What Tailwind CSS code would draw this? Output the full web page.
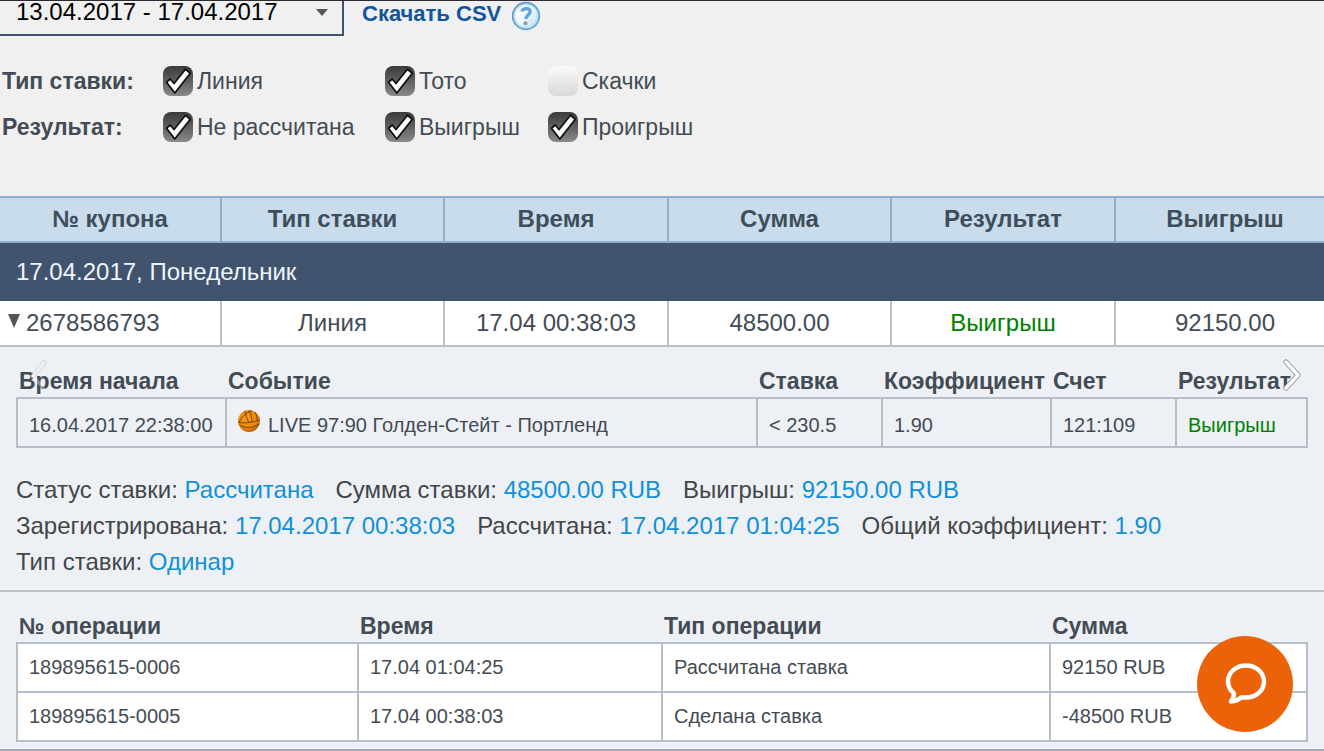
<!DOCTYPE html>
<html lang="ru">
<head>
<meta charset="utf-8">
<meta name="viewport" content="width=device-width, initial-scale=1">
<title>История ставок</title>
<script src="https://cdn.jsdelivr.net/npm/@tailwindcss/browser@4"></script>
</head>
<body class="bg-[#f0f0f0] font-['Liberation_Sans',Arial,sans-serif] text-2xl leading-7 text-[#434c54]">
<svg class="hidden" aria-hidden="true">
  <symbol id="tick" viewBox="0 0 30 30">
    <path d="M3.500 16.200 L7.200 13 L11 17.500 L22.500 3.200 L27.300 7.200 L11.800 27 Z" fill="#fff" stroke="#111" stroke-width="1.800" stroke-linejoin="round"/>
  </symbol>
</svg>
<div class="relative min-h-screen overflow-hidden border-t border-[#2d2a32]">

  <!-- Period and export -->
  <div class="flex items-start">
    <div class="grid w-86 items-start">
      <select aria-label="Период" class="col-start-1 row-start-1 h-[35px] appearance-none border-r-2 border-b-2 border-[#42546d] bg-transparent pb-3 pl-4 text-2xl leading-5 text-black">
        <option>13.04.2017 - 17.04.2017</option>
      </select>
      <svg class="pointer-events-none col-start-1 row-start-1 mt-2 mr-4 h-[7px] w-3 justify-self-end" viewBox="0 0 12 7"><path d="M0 0H12L6 7Z" fill="#555"/></svg>
    </div>
    <a href="#csv" class="ml-[18px] text-[22px] leading-[26px] font-bold text-[#10569f]">Скачать CSV</a>
    <button type="button" aria-label="Справка" class="ml-[10px] h-[30px] w-[30px]">
      <svg viewBox="0 0 30 30" class="h-[30px] w-[30px]">
        <defs><linearGradient id="hg" x1="0" y1="0" x2="1" y2="1"><stop offset="0" stop-color="#6f96c4"/><stop offset="1" stop-color="#62b0dc"/></linearGradient>
        <linearGradient id="hf" x1="0" y1="0" x2="1" y2="1"><stop offset="0" stop-color="#fff"/><stop offset="0.500" stop-color="#eef6fc"/><stop offset="1" stop-color="#b5e0f6"/></linearGradient></defs>
        <circle cx="15" cy="15" r="13.200" fill="url(#hf)" stroke="url(#hg)" stroke-width="2"/>
        <circle cx="15" cy="15" r="11.600" fill="none" stroke="#bcdcf0" stroke-width="1.500"/>
        <path d="M11 10.500C11.500 7 18.800 6.300 19.200 10.500C19.500 13.500 15 14 14.800 18" fill="none" stroke="#5ba4dc" stroke-width="3.200"/>
        <circle cx="14.500" cy="22.300" r="2" fill="#7d9dbd"/>
      </svg>
    </button>
  </div>

  <!-- Filters -->
  <div class="mt-[30px] grid grid-cols-[161px_222px_163px_auto] justify-start gap-y-4 pl-[2px] text-[23px] leading-[30px]">
    <span class="font-bold">Тип ставки:</span>
    <label class="flex gap-1 whitespace-nowrap"><span class="grid"><input type="checkbox" checked class="peer col-start-1 row-start-1 size-[30px] appearance-none rounded-lg bg-linear-to-b from-[#fafafa] to-[#d9d9d9] checked:from-[#3a3a3a] checked:to-[#8a8a8a]"><svg class="pointer-events-none col-start-1 row-start-1 hidden size-[30px] peer-checked:block"><use href="#tick"/></svg></span>Линия</label>
    <label class="flex gap-1 whitespace-nowrap"><span class="grid"><input type="checkbox" checked class="peer col-start-1 row-start-1 size-[30px] appearance-none rounded-lg bg-linear-to-b from-[#fafafa] to-[#d9d9d9] checked:from-[#3a3a3a] checked:to-[#8a8a8a]"><svg class="pointer-events-none col-start-1 row-start-1 hidden size-[30px] peer-checked:block"><use href="#tick"/></svg></span>Тото</label>
    <label class="flex gap-1 whitespace-nowrap"><span class="grid"><input type="checkbox" class="peer col-start-1 row-start-1 size-[30px] appearance-none rounded-lg bg-linear-to-b from-[#fafafa] to-[#d9d9d9] checked:from-[#3a3a3a] checked:to-[#8a8a8a]"><svg class="pointer-events-none col-start-1 row-start-1 hidden size-[30px] peer-checked:block"><use href="#tick"/></svg></span>Скачки</label>
    <span class="font-bold">Результат:</span>
    <label class="flex gap-1 whitespace-nowrap"><span class="grid"><input type="checkbox" checked class="peer col-start-1 row-start-1 size-[30px] appearance-none rounded-lg bg-linear-to-b from-[#fafafa] to-[#d9d9d9] checked:from-[#3a3a3a] checked:to-[#8a8a8a]"><svg class="pointer-events-none col-start-1 row-start-1 hidden size-[30px] peer-checked:block"><use href="#tick"/></svg></span>Не рассчитана</label>
    <label class="flex gap-1 whitespace-nowrap"><span class="grid"><input type="checkbox" checked class="peer col-start-1 row-start-1 size-[30px] appearance-none rounded-lg bg-linear-to-b from-[#fafafa] to-[#d9d9d9] checked:from-[#3a3a3a] checked:to-[#8a8a8a]"><svg class="pointer-events-none col-start-1 row-start-1 hidden size-[30px] peer-checked:block"><use href="#tick"/></svg></span>Выигрыш</label>
    <label class="flex gap-1 whitespace-nowrap"><span class="grid"><input type="checkbox" checked class="peer col-start-1 row-start-1 size-[30px] appearance-none rounded-lg bg-linear-to-b from-[#fafafa] to-[#d9d9d9] checked:from-[#3a3a3a] checked:to-[#8a8a8a]"><svg class="pointer-events-none col-start-1 row-start-1 hidden size-[30px] peer-checked:block"><use href="#tick"/></svg></span>Проигрыш</label>
  </div>

  <!-- Coupons -->
  <table class="mt-[54px] w-full table-fixed border-separate border-spacing-0 text-center">
    <colgroup><col class="w-[222px]"><col class="w-[223px]"><col class="w-[224px]"><col class="w-[223px]"><col class="w-[224px]"><col></colgroup>
    <thead>
      <tr class="h-[47px] bg-[#c9dcec] text-[#3e4f5b]">
        <th class="border-y-2 border-r-2 border-[#8fafcb] pb-[2px]">№ купона</th>
        <th class="border-y-2 border-r-2 border-[#8fafcb] pb-[2px]">Тип ставки</th>
        <th class="border-y-2 border-r-2 border-[#8fafcb] pb-[2px]">Время</th>
        <th class="border-y-2 border-r-2 border-[#8fafcb] pb-[2px]">Сумма</th>
        <th class="border-y-2 border-r-2 border-[#8fafcb] pb-[2px]">Результат</th>
        <th class="border-y-2 border-[#8fafcb] pb-[2px] pl-[10px]">Выигрыш</th>
      </tr>
    </thead>
    <tbody>
      <tr class="h-[58px] bg-[#42546d] text-[#eef5fd]"><td colspan="6" class="pl-4 text-left">17.04.2017, Понедельник</td></tr>
      <tr class="h-[46px] bg-white">
        <td class="border-r-2 border-b-2 border-[#bac1c9]"><button type="button" class="flex items-center gap-[6px] pl-2"><svg class="mb-1 h-[14px] w-3" viewBox="0 0 12 14"><path d="M0 0H12L6 14Z" fill="#555"/></svg>2678586793</button></td>
        <td class="border-r-2 border-b-2 border-[#bac1c9]">Линия</td>
        <td class="border-r-2 border-b-2 border-[#bac1c9]">17.04 00:38:03</td>
        <td class="border-r-2 border-b-2 border-[#bac1c9]">48500.00</td>
        <td class="border-r-2 border-b-2 border-[#bac1c9] text-[#008000]">Выигрыш</td>
        <td class="border-b-2 border-[#bac1c9] pl-[10px]">92150.00</td>
      </tr>
    </tbody>
  </table>

  <!-- Coupon details -->
  <section class="relative border-b-2 border-[#bac1c9] bg-[#edf1f5] px-4 pt-[17px] pb-[10px]">
    <table class="w-full table-fixed border-collapse text-left whitespace-nowrap">
      <colgroup><col class="w-[209px]"><col><col class="w-[125px]"><col class="w-[169px]"><col class="w-[125px]"><col class="w-[131px]"></colgroup>
      <thead class="text-[23px]"><tr class="h-[34px]">
        <th class="pl-[2px]">Время начала</th><th class="pl-[2px]">Событие</th><th class="pl-[2px]">Ставка</th><th class="pl-[2px]">Коэффициент</th><th class="pl-[2px]">Счет</th><th class="pl-[2px]">Результат</th>
      </tr></thead>
      <tbody class="text-xl"><tr class="h-[49px]">
        <td class="border-2 border-[#b6bec7] pt-1 pl-[11px]">16.04.2017 22:38:00</td>
        <td class="border-2 border-[#b6bec7] pt-1 pl-[10px]"><div class="flex items-center gap-[7px]">
          <svg class="mb-2 size-6" viewBox="0 0 24 24"><defs><radialGradient id="ball" cx="0.400" cy="0.350" r="0.700"><stop offset="0" stop-color="#f79a1c"/><stop offset="0.700" stop-color="#e8830b"/><stop offset="1" stop-color="#a85a0a"/></radialGradient></defs><circle cx="12" cy="12" r="11" fill="url(#ball)"/><path d="M1.500 13.500C8 14.500 16 13.500 22.500 11M8 1.800C8.500 6 10 10 12 13.800M15 1.500C9 4 4 8 2 14M12 1.500C14 5 15 9 15 13.500M2.500 16C9 20 16 19 22 15M18 3C19.500 6 20.500 9 20 12" fill="none" stroke="#5b3108" stroke-opacity="0.750" stroke-width="1"/></svg>LIVE 97:90 Голден-Стейт - Портленд</div></td>
        <td class="border-2 border-[#b6bec7] pt-1 pl-[11px]">&lt; 230.5</td>
        <td class="border-2 border-[#b6bec7] pt-1 pl-[11px]">1.90</td>
        <td class="border-2 border-[#b6bec7] pt-1 pl-[11px]">121:109</td>
        <td class="border-2 border-[#b6bec7] pt-1 pl-[11px] text-[#008000]">Выигрыш</td>
      </tr></tbody>
    </table>
    <div class="mt-6 text-[#434648] leading-9">
      <p class="flex gap-[22px]"><span>Статус ставки: <span class="text-[#1190d8]">Рассчитана</span></span><span>Сумма ставки: <span class="text-[#1190d8]">48500.00 RUB</span></span><span>Выигрыш: <span class="text-[#1190d8]">92150.00 RUB</span></span></p>
      <p class="flex gap-[22px]"><span>Зарегистрирована: <span class="text-[#1190d8]">17.04.2017 00:38:03</span></span><span>Рассчитана: <span class="text-[#1190d8]">17.04.2017 01:04:25</span></span><span>Общий коэффициент: <span class="text-[#1190d8]">1.90</span></span></p>
      <p>Тип ставки: <span class="text-[#1190d8]">Одинар</span></p>
    </div>
    <button type="button" aria-label="Назад" class="absolute top-[13px] left-[29px] h-8 w-5"><svg viewBox="0 0 20 32" class="h-8 w-5"><g fill="none" stroke-linecap="round"><path d="M15 3L4 16" stroke="#c4c4c4" stroke-opacity="0.600" stroke-width="5"/><path d="M15 3L4 16" stroke="#f4f5f6" stroke-width="3" stroke-opacity="0.900"/><path d="M4 16L15 29" stroke="#fff" stroke-width="3" stroke-opacity="0.350"/></g></svg></button>
    <button type="button" aria-label="Вперёд" class="absolute top-3 right-[22px] h-8 w-5"><svg viewBox="0 0 20 32" class="h-8 w-5"><path d="M4 3L16 16L4 29" fill="none" stroke="#888" stroke-width="5" stroke-linecap="round" stroke-linejoin="round"/><path d="M4 3L16 16L4 29" fill="none" stroke="#fff" stroke-width="3.500" stroke-linecap="round" stroke-linejoin="round"/></svg></button>
  </section>

  <!-- Operations -->
  <section class="border-b-2 border-[#a5abb2] bg-[#edf1f5] px-4 pt-[17px] pb-[7px]">
    <table class="w-full table-fixed border-collapse text-left whitespace-nowrap">
      <colgroup><col class="w-[341px]"><col class="w-[304px]"><col><col class="w-[257px]"></colgroup>
      <thead class="text-[23px]"><tr class="h-[34px]">
        <th class="pl-[2px]">№ операции</th><th class="pl-[2px]">Время</th><th class="pl-[2px]">Тип операции</th><th class="pl-[2px]">Сумма</th>
      </tr></thead>
      <tbody class="bg-white text-xl">
        <tr class="h-[49px]"><td class="border-2 border-[#b6bec7] pb-[2px] pl-[11px]">189895615-0006</td><td class="border-2 border-[#b6bec7] pb-[2px] pl-[11px]">17.04 01:04:25</td><td class="border-2 border-[#b6bec7] pb-[2px] pl-[11px]">Рассчитана ставка</td><td class="border-2 border-[#b6bec7] pb-[2px] pl-[11px]">92150 RUB</td></tr>
        <tr class="h-[49px]"><td class="border-2 border-[#b6bec7] pb-[2px] pl-[11px]">189895615-0005</td><td class="border-2 border-[#b6bec7] pb-[2px] pl-[11px]">17.04 00:38:03</td><td class="border-2 border-[#b6bec7] pb-[2px] pl-[11px]">Сделана ставка</td><td class="border-2 border-[#b6bec7] pb-[2px] pl-[11px]">-48500 RUB</td></tr>
      </tbody>
    </table>
  </section>

  <!-- Support chat -->
  <button type="button" aria-label="Чат с поддержкой" class="fixed right-[31px] bottom-[19px] size-24 rounded-full bg-[#eb6209]">
    <svg viewBox="0 0 96 96" class="size-24"><path d="M49 29.500C39 29.500 31 36.500 31 45.500C31 50.500 33.500 54.500 37 57.500C37 60.500 36 63 34 65.500C38.500 65.500 42 63.500 44.500 61.200C46 61.500 47.500 61.600 49 61.600C59 61.600 67 54.500 67 45.500C67 36.500 59 29.500 49 29.500Z" fill="none" stroke="#fff" stroke-width="4.500" stroke-linejoin="round"/></svg>
  </button>
</div>
</body>
</html>
